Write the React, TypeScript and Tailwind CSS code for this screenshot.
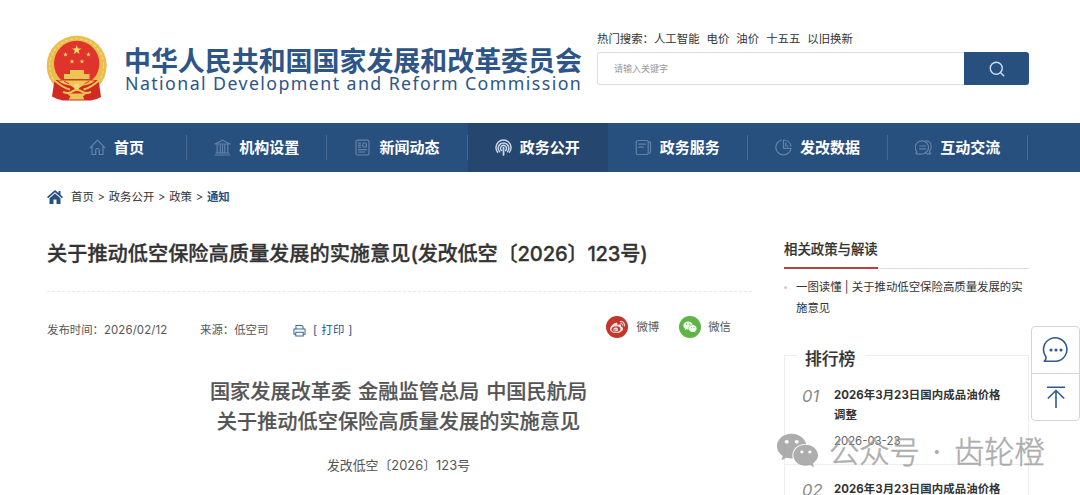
import React from "react";
import { Search } from "lucide-react";
import { FaWeibo, FaWeixin } from "react-icons/fa";

interface NavItem {
    label: string;
    icon: React.ReactNode;
    active?: boolean;
}

const Icon: React.FC<{ children: React.ReactNode }> = ({ children }) => (
    <svg
        viewBox="0 0 17 17"
        className="w-[17px] h-[17px] shrink-0"
        fill="none"
        stroke="currentColor"
        strokeWidth="1.2"
        strokeLinecap="round"
        strokeLinejoin="round"
    >
        {children}
    </svg>
);

const navItems: NavItem[] = [
    {
        label: "首页",
        icon: (
            <Icon>
                <path d="M1 8.8 8.5 1.2 16 8.8M3 7.2v8.3h3.7v-4.2a1.8 1.8 0 0 1 3.6 0v4.2H14V7.2" />
            </Icon>
        ),
    },
    {
        label: "机构设置",
        icon: (
            <Icon>
                <path d="M1 5 8.5 1.2 16 5ZM3.2 6v8M6.2 6v8M8.5 6v8M10.8 6v8M13.8 6v8M2 14h13M1 16h15" />
            </Icon>
        ),
    },
    {
        label: "新闻动态",
        icon: (
            <Icon>
                <rect x="2" y="1.2" width="13" height="14.8" rx="1.8" />
                <rect x="8.8" y="4" width="3.6" height="4" rx="1" />
                <path d="M4.5 4.2h2M4.5 6.2h2M4.5 8.2h2M4.5 10.7h8M4.5 13h6" />
            </Icon>
        ),
    },
    {
        label: "政务公开",
        active: true,
        icon: (
            <Icon>
                <path d="M2.6 13.2a7.500 7.500 0 1 1 11.800 0M4.600 12.800a5.300 5.300 0 1 1 7.800 0M6.400 11.500a3 3 0 1 1 4.200 0" strokeWidth="1.5" />
                <path d="M8.5 8.5v7.400" strokeWidth="1.8" />
            </Icon>
        ),
    },
    {
        label: "政务服务",
        icon: (
            <Icon>
                <rect x="1.2" y="1.5" width="12" height="14" rx="1.5" />
                <path d="M3.8 5.2h6.6M3.8 8.2h4.6M14 2.6c1 0 1.5.6 1.5 1.4v9c0 .9-.5 1.5-1.5 1.5" />
            </Icon>
        ),
    },
    {
        label: "发改数据",
        icon: (
            <Icon>
                <path d="M6.500 1A7.600 7.600 0 1 0 16 9.300H8.500V1A7.600 7.600 0 0 1 16 7" />
                <path d="M10.800 7V3.800M10.800 7H13" />
            </Icon>
        ),
    },
    {
        label: "互动交流",
        icon: (
            <Icon>
                <path d="M.8 14.600c.9-.6 1.200-1.300.8-2.200A6.600 6.600 0 1 1 7.400 15c-2 .2-4.500.2-6.600-.4Z" />
                <path d="M4.600 7h5.800M4.600 9.800h5.800M11 1.500c3 .5 5.200 3 5.200 6.200 0 1.800-.6 3.200-1.600 4.400.1 1.200.4 2 1 2.700-1.600.3-3 .2-4.400-.3" />
            </Icon>
        ),
    },
];

const hotWords = ["人工智能", "电价", "油价", "十五五", "以旧换新"];

const ranking = [
    { no: "01", title: "2026年3月23日国内成品油价格调整", date: "2026-03-23" },
    { no: "02", title: "2026年3月23日国内成品油价格调整", date: "2026-03-23" },
];

const star = "0,-5 1.2,-1.6 4.8,-1.5 1.9,.6 2.9,4 0,2 -2.9,4 -1.9,.6 -4.8,-1.5 -1.2,-1.6";

const Emblem: React.FC = () => (
    <svg viewBox="0 0 62 66" className="w-[62px] h-[66px] shrink-0">
        <circle cx="30.7" cy="30.7" r="30" fill="#e9be4e" />
        <circle cx="30.7" cy="30.7" r="27" fill="none" stroke="#f3d778" strokeWidth="1.2" strokeDasharray="3 2" />
        <path d="M8.5 45 6 61.5q4 2.500 11 4h28q6-1 10-3.500L52.500 45Z" fill="#d02a22" />
        <circle cx="30.7" cy="28.5" r="22.7" fill="#df342b" />
        <g fill="#f7da66">
            <polygon points={star} transform="translate(30.7 15)" />
            <polygon points={star} transform="translate(19.5 19.5) scale(.5)" />
            <polygon points={star} transform="translate(42.5 19.5) scale(.5)" />
            <polygon points={star} transform="translate(26 26.5) scale(.5)" />
            <polygon points={star} transform="translate(36 26.5) scale(.5)" />
        </g>
        <path d="M24 35h14v4h5.5v5h-25.500v-5H24Z" fill="#ecc655" />
        <path d="M12 45.5h37q-5 4.500-12 5a7 4 0 0 1-12.500 0q-7-.5-12.500-5Z" fill="#ecc655" />
        <path d="m18 46.2 5 2.600M43.500 46.200l-5 2.600" stroke="#df342b" strokeWidth="1" />
        <path d="M8 45q9 8 16 9.500M53.500 45q-9 8-16 9.500M17 57q6 2.500 10-1 4-2 8 0 4 3.500 10 1" fill="none" stroke="#ecc655" strokeWidth="2" />
        <circle cx="30.7" cy="51.5" r="3" fill="#f3d778" />
        <path d="M21 58.5h19.500l-3.500 3 1.500 3h-16l2-3Z" fill="#ecc655" />
    </svg>
);

const Header: React.FC = () => (
    <header className="flex h-[123px] pl-[46px]">
        <div className="pt-[35px]">
            <Emblem />
        </div>
        <div className="ml-4 w-[473px] pt-[47px] text-[#2d5588] whitespace-nowrap">
            <h1 className="text-[26.95px] leading-[30px] font-bold">中华人民共和国国家发展和改革委员会</h1>
            <p className="ml-px font-['Noto_Sans'] text-[17.8px] leading-[12px] tracking-[1.4px]">
                National Development and Reform Commission
            </p>
        </div>
        <div className="w-[432px] pt-8">
            <div className="flex h-4 items-center gap-[7px] text-[11.4px] whitespace-nowrap">
                <span className="-mr-[7px]">热门搜索：</span>
                {hotWords.map((word) => (
                    <span key={word}>{word}</span>
                ))}
            </div>
            <div className="mt-1 flex h-[33px]">
                <div className="flex flex-1 items-center rounded-l-[3px] border border-r-0 border-[#dedede] pl-4 text-[9px] text-[#999]">
                    请输入关键字
                </div>
                <button className="flex w-[65px] items-center justify-center rounded-r-[3px] bg-[#28507f] text-[#c9dcf3]">
                    <Search size={18} strokeWidth={1.9} />
                </button>
            </div>
        </div>
    </header>
);

const NavBar: React.FC = () => (
    <nav className="flex h-[49px] bg-[#28507f] pl-[47px]">
        {navItems.map((item) => (
            <div
                key={item.label}
                className={`flex w-[140.2px] items-center justify-center ${item.active ? "bg-[#25466f]" : ""}`}
            >
                <div className={`-ml-px pr-2 ${item.active ? "text-[#c5d6e9]" : "text-[#6483a8]"} ml-auto`}>{item.icon}</div>
                <span className="mr-auto pt-px text-[15px] font-bold text-white">{item.label}</span>
                <i className={`h-[25px] w-px ${item.active ? "" : "bg-[#48698f]"}`} />
            </div>
        ))}
    </nav>
);

const Breadcrumb: React.FC = () => (
    <div className="flex h-[50px] items-center pl-[47px] text-[11.4px] whitespace-nowrap">
        <svg viewBox="0 0 16 14" className="mr-2 h-[14px] w-4" fill="#28507f">
            <path d="M8 0 0 7l1.1 1.200L8 2.300l6.900 5.900L16 7l-2.500-2.200V1h-2v2Z" />
            <path d="M8 3.6 2.500 8.300V14h4V9.500h3V14h4V8.300Z" />
        </svg>
        <span className="pt-[2px] [word-spacing:0.5px]">首页 &gt; 政务公开 &gt; 政策 &gt;&nbsp;</span>
        <span className="pt-[2px] font-bold text-[#28507f]">通知</span>
    </div>
);

const Article: React.FC = () => (
    <main className="w-[705px]">
        <h2 className="flex h-[62px] items-center pt-[2px] text-[20.2px] font-medium whitespace-nowrap text-[#333] [-webkit-text-stroke:0.3px]">
            <span>
                关于推动低空保险高质量发展的实施意见<span className="tracking-[-0.2px]">(发改低空〔2026〕123号)</span>
            </span>
        </h2>
        <div className="mt-[7px] border-t border-dashed border-[#e9e9e9]" />
        <div className="flex h-[74px] items-center text-[11.4px] whitespace-nowrap text-[#555]">
            <span className="w-[153px] pt-[3px]">
                发布时间：<span className="tracking-[0.13px]">2026/02/12</span>
            </span>
            <span className="w-[93px] pt-[3px]">来源：低空司</span>
            <svg viewBox="0 0 14 14" className="mt-[3px] h-[13px] w-[13px]" fill="none" stroke="#3c6697" strokeWidth="1.1">
                <path d="M3.2 5.500v-4h6.300l1.300 1.300v2.700M3 11H1V5.500h12V11h-2M3 9h8v4H3Z" />
            </svg>
            <span className="ml-[7px] pt-[3px] tracking-[0.4px] text-[#28507f]">[ 打印 ]</span>
            <div className="mb-[4px] ml-auto flex items-center pr-[21px]">
                <span className="flex h-[22px] w-[22px] items-center justify-center rounded-full bg-[#c6352b] text-[#fbe5e2]">
                    <FaWeibo size={15} />
                </span>
                <span className="ml-2 pt-px">微博</span>
                <span className="ml-5 flex h-[22px] w-[22px] items-center justify-center rounded-full bg-[#5eb446] text-[#eef8eb]">
                    <FaWeixin size={14} />
                </span>
                <span className="ml-[7px] pt-px">微信</span>
            </div>
        </div>
        <div className="pt-[11px] text-center text-[#555]">
            <h3 className="-ml-[2px] text-[20.2px] leading-[29.5px] font-medium [-webkit-text-stroke:0.2px]">
                <span className="[word-spacing:1.5px]">国家发展改革委 金融监管总局 中国民航局</span>
                <br />
                关于推动低空保险高质量发展的实施意见
            </h3>
            <p className="mt-5 -ml-[2px] text-[12.9px] leading-[20px]">发改低空〔2026〕123号</p>
        </div>
    </main>
);

const Sidebar: React.FC = () => (
    <aside className="ml-8 w-[245px]">
        <div className="flex h-[47px] border-b border-[#ddd]">
            <h4 className="-mb-px flex items-center border-b-2 border-[#b9413b] pt-[10px] text-[13.4px] font-medium [-webkit-text-stroke:0.2px]">
                相关政策与解读
            </h4>
        </div>
        <div className="flex pt-[8px] text-[11.4px] leading-[20.5px]">
            <i className="mt-[9px] h-[3px] w-[3px] rounded-full bg-[#ccc]" />
            <p className="ml-[9px] w-[233px]">一图读懂 | 关于推动低空保险高质量发展的实施意见</p>
        </div>
        <section className="mt-[37px] h-[200px] border border-[#eee]">
            <h4 className="-mt-[9px] mb-[-1px] ml-3 flex h-[25px] w-[69px] items-center bg-white pl-2 text-[16.8px] font-medium [-webkit-text-stroke:0.2px]">
                排行榜
            </h4>
            {ranking.map((item) => (
                <div key={item.no} className="flex h-[94px] border-b border-[#eee] pt-[14px] pl-[17px]">
                    <span className="w-8 pt-px text-[16.5px] leading-[20px] text-[#888] italic">{item.no}</span>
                    <div className="text-[11.4px]">
                        <p className="w-[172px] leading-[20px] font-bold tracking-[0.08px]">{item.title}</p>
                        <p className="mt-[6px] leading-[20px] text-[#666]">{item.date}</p>
                    </div>
                </div>
            ))}
        </section>
    </aside>
);

const FloatTools: React.FC = () => (
    <div className="absolute top-[326px] left-[1031px] h-[95px] w-[49px] rounded border border-[#d5d5d5] bg-white text-[#315a8c]">
        <div className="flex h-[47px] items-center justify-center border-b border-[#d5d5d5]">
            <svg viewBox="0 0 28 28" className="h-7 w-7" fill="none" stroke="currentColor" strokeWidth="1.6">
                <path d="M2.3 25.200c1.800-1.500 2.200-3 1.300-5A11.700 11.700 0 1 1 14 25.200Z" strokeLinejoin="round" />
                <g fill="currentColor" stroke="none">
                    <circle cx="9" cy="14" r="1.6" />
                    <circle cx="14" cy="14" r="1.6" />
                    <circle cx="19" cy="14" r="1.6" />
                </g>
            </svg>
        </div>
        <div className="flex h-[46px] items-center justify-center">
            <svg viewBox="0 0 20 22" className="-mt-px h-[22px] w-5" fill="none" stroke="currentColor" strokeWidth="1.6">
                <path d="M1 1.2h18M10 22V5M1.800 12.500 10 4.500l8.200 8" />
            </svg>
        </div>
    </div>
);

const Watermark: React.FC = () => (
    <div className="absolute top-[428px] left-[776px] flex h-11 items-center whitespace-nowrap text-[#999] opacity-80">
        <FaWeixin size={43} />
        <span className="ml-[10px] pt-[5px] text-[30.3px] font-light [-webkit-text-stroke:0.5px]">公众号</span>
        <span className="w-[34px] pt-[2px] text-center text-[30px]">·</span>
        <span className="pt-[5px] text-[30.3px] font-light [-webkit-text-stroke:0.5px]">齿轮橙</span>
    </div>
);

export default function App() {
    return (
        <div
            lang="zh-CN"
            className="relative h-[495px] w-[1080px] overflow-hidden bg-white font-['Inter','Noto_Sans_CJK_SC',sans-serif] text-[#333]"
        >
            <Header />
            <NavBar />
            <Breadcrumb />
            <div className="flex pl-[47px]">
                <Article />
                <Sidebar />
            </div>
            <FloatTools />
            <Watermark />
        </div>
    );
}
